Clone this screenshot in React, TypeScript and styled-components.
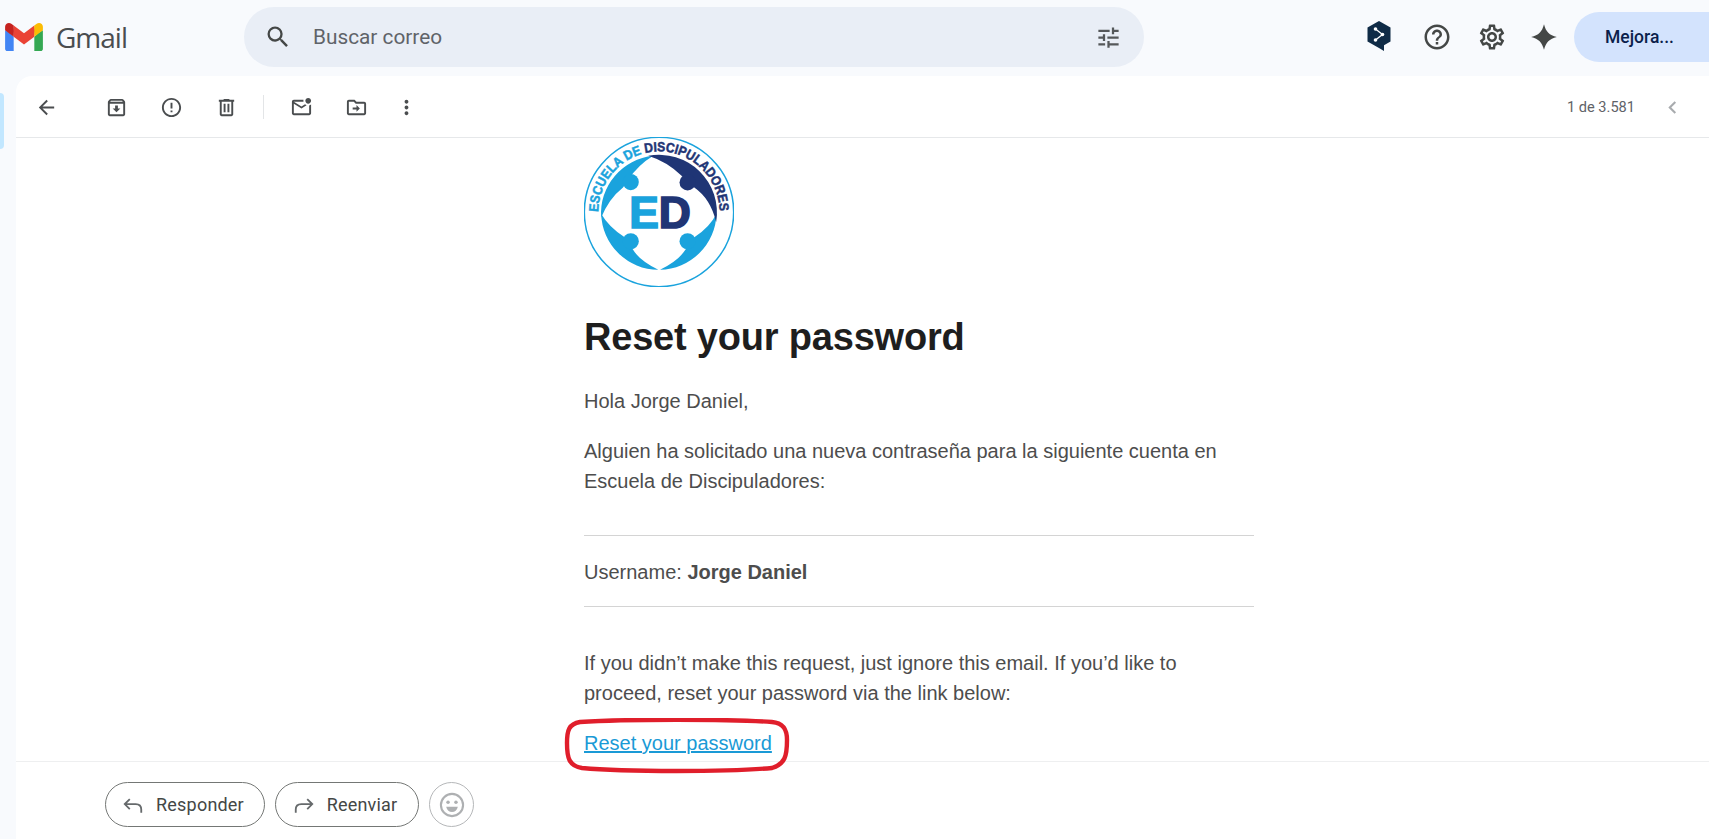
import React from "react";
import styled, { createGlobalStyle } from "styled-components";

const Global = createGlobalStyle`
  html, body { margin: 0; padding: 0; height: 100%; overflow: hidden; background: #f8fafd; }
  #root { height: 100%; }
`;

const Page = styled.div`
  height: 839px;
  display: flex;
  flex-direction: column;
  background: #f8fafd;
  font-family: Roboto, "Liberation Sans", sans-serif;
  overflow: hidden;
`;

const TopBar = styled.header`
  flex: 0 0 76px;
  height: 76px;
  display: flex;
  align-items: flex-start;
`;

const Brand = styled.div`
  flex: 0 0 244px;
  height: 74px;
  padding-left: 5px;
  box-sizing: border-box;
  display: flex;
  align-items: center;
  gap: 13px;
`;

const BrandName = styled.span`
  font-family: "Open Sans", Roboto, sans-serif;
  font-size: 28px;
  letter-spacing: -1px;
  color: #4a4d4f;
`;

const SearchPill = styled.div`
  width: 900px;
  height: 60px;
  margin-top: 7px;
  padding: 0 16px 0 14px;
  box-sizing: border-box;
  border-radius: 30px;
  background: #e9eef6;
  display: flex;
  align-items: center;
`;

const SearchText = styled.span`
  flex: 1;
  margin-left: 15px;
  font-size: 20.8px;
  color: #5f6368;
`;

const Slot = styled.span<{ $left?: number; $right?: number }>`
  flex: 0 0 40px;
  width: 40px;
  height: 40px;
  margin-left: ${(p) => p.$left ?? 0}px;
  margin-right: ${(p) => p.$right ?? 0}px;
  display: flex;
  align-items: center;
  justify-content: center;
`;

const Actions = styled.div`
  margin-left: auto;
  height: 74px;
  display: flex;
  align-items: center;
`;

const Upgrade = styled.div`
  width: 135px;
  height: 50px;
  margin-left: 10px;
  padding-right: 4px;
  box-sizing: border-box;
  border-radius: 25px 0 0 25px;
  background: #d3e3fd;
  color: #0b1f4b;
  font-size: 17.5px;
  font-weight: 500;
  display: flex;
  align-items: center;
  justify-content: center;
`;

const Main = styled.div`
  flex: 1;
  display: flex;
  min-height: 0;
`;

const Rail = styled.div`
  flex: 0 0 16px;
  padding-top: 17px;
`;

const RailMark = styled.div`
  width: 4px;
  height: 56px;
  border-radius: 0 8px 8px 0;
  background: #c2e7ff;
`;

const Card = styled.main`
  flex: 1;
  min-width: 0;
  display: flex;
  flex-direction: column;
  background: #fff;
  border-top-left-radius: 16px;
`;

const Toolbar = styled.div`
  flex: 0 0 62px;
  height: 62px;
  box-sizing: border-box;
  padding: 1px 0 0 10px;
  border-bottom: 1px solid #e6e8ea;
  display: flex;
  align-items: center;
  gap: 15px;
`;

const ToolDivider = styled.span`
  width: 1px;
  height: 24px;
  margin: 0 2px;
  background: #e3e5e7;
`;

const Count = styled.span`
  margin-left: auto;
  font-size: 14.6px;
  color: #5f6368;
`;

const Body = styled.div`
  flex: 1;
  position: relative;
  z-index: 1;
  padding-left: 568px;
  min-height: 0;
`;

const Mail = styled.article`
  width: 670px;
  font-family: "Liberation Sans", Arial, sans-serif;
  font-size: 20px;
  line-height: 30px;
  color: #4d4d4d;
`;

const Logo = styled.svg`
  display: block;
  width: 150px;
  height: 150px;
  margin-top: -1px;
`;

const Title = styled.h1`
  margin: 27px 0 26px;
  font-size: 38px;
  line-height: 46px;
  font-weight: 700;
  letter-spacing: -0.2px;
  color: #1e1e1e;
`;

const Para = styled.p`
  margin: 0 0 20px;
`;

const UserBox = styled.div`
  margin: 39px 0 41px;
  padding: 21px 0 19px;
  border-top: 1px solid #d4d4d4;
  border-bottom: 1px solid #d4d4d4;
`;

const LinkWrap = styled.div`
  position: relative;
  width: max-content;
`;

const MailLink = styled.a`
  color: #1a9ad6;
  text-decoration: underline;
`;

const Oval = styled.svg`
  position: absolute;
  left: -20px;
  top: -10px;
  width: 226px;
  height: 56px;
  pointer-events: none;
`;

const ReplyBar = styled.div`
  flex: 0 0 78px;
  box-sizing: border-box;
  padding: 20px 0 0 89px;
  border-top: 1px solid #eeeff0;
  display: flex;
  align-items: flex-start;
  gap: 10px;
`;

const ReplyButton = styled.div<{ $w: number }>`
  width: ${(p) => p.$w}px;
  height: 45px;
  box-sizing: border-box;
  padding-right: 4px;
  border: 1px solid #747775;
  border-radius: 23px;
  display: flex;
  align-items: center;
  justify-content: center;
  gap: 12px;
  font-size: 18px;
  letter-spacing: 0.2px;
  color: #444746;
`;

const EmojiButton = styled.div`
  width: 45px;
  height: 45px;
  box-sizing: border-box;
  border: 1px solid #b5b7b9;
  border-radius: 50%;
  display: flex;
  align-items: center;
  justify-content: center;
`;

const paths = {
  search: "M15.5 14h-.79l-.28-.27A6.471 6.471 0 0 0 16 9.5 6.5 6.5 0 1 0 9.5 16c1.61 0 3.09-.59 4.23-1.57l.27.28v.79l5 4.99L20.49 19l-4.99-5zm-6 0C7.01 14 5 11.99 5 9.5S7.01 5 9.5 5 14 7.01 14 9.5 11.99 14 9.5 14z",
  tune: "M3 17v2h6v-2H3zM3 5v2h10V5H3zm10 16v-2h8v-2h-8v-2h-2v6h2zM7 9v2H3v2h4v2h2V9H7zm14 4v-2H11v2h10zm-6-4h2V7h4V5h-4V3h-2v6z",
  help: "M11 18h2v-2h-2v2zm1-16C6.48 2 2 6.48 2 12s4.48 10 10 10 10-4.48 10-10S17.52 2 12 2zm0 18c-4.41 0-8-3.59-8-8s3.59-8 8-8 8 3.59 8 8-3.59 8-8 8zm0-14c-2.21 0-4 1.79-4 4h2c0-1.1.9-2 2-2s2 .9 2 2c0 2-3 1.75-3 5h2c0-2.25 3-2.5 3-5 0-2.21-1.79-4-4-4z",
  gear: "M19.43 12.98c.04-.32.07-.64.07-.98 0-.34-.03-.66-.07-.98l2.11-1.65c.19-.15.24-.42.12-.64l-2-3.46c-.09-.16-.26-.25-.44-.25-.06 0-.12.01-.17.03l-2.49 1c-.52-.4-1.08-.73-1.69-.98l-.38-2.65C14.46 2.18 14.25 2 14 2h-4c-.25 0-.46.18-.49.42l-.38 2.65c-.61.25-1.17.59-1.69.98l-2.49-1c-.06-.02-.12-.03-.18-.03-.17 0-.34.09-.43.25l-2 3.46c-.13.22-.07.49.12.64l2.11 1.65c-.04.32-.07.65-.07.98 0 .33.03.66.07.98l-2.11 1.65c-.19.15-.24.42-.12.64l2 3.46c.09.16.26.25.44.25.06 0 .12-.01.17-.03l2.49-1c.52.4 1.08.73 1.69.98l.38 2.65c.03.24.24.42.49.42h4c.25 0 .46-.18.49-.42l.38-2.65c.61-.25 1.17-.59 1.69-.98l2.49 1c.06.02.12.03.18.03.17 0 .34-.09.43-.25l2-3.46c.12-.22.07-.49-.12-.64l-2.11-1.65zm-1.98-1.71c.04.31.05.52.05.73 0 .21-.02.43-.05.73l-.14 1.13.89.7 1.08.84-.7 1.21-1.27-.51-1.04-.42-.9.68c-.43.32-.84.56-1.25.73l-1.06.43-.16 1.13-.2 1.35h-1.4l-.19-1.35-.16-1.13-1.06-.43c-.43-.18-.83-.41-1.23-.71l-.91-.7-1.06.43-1.27.51-.7-1.21 1.08-.84.89-.7-.14-1.13c-.03-.31-.05-.54-.05-.74s.02-.43.05-.73l.14-1.13-.89-.7-1.08-.84.7-1.21 1.27.51 1.04.42.9-.68c.43-.32.84-.56 1.25-.73l1.06-.43.16-1.13.2-1.35h1.39l.19 1.35.16 1.13 1.06.43c.43.18.83.41 1.23.71l.91.7 1.06-.43 1.27-.51.7 1.21-1.07.85-.89.7.14 1.13zM12 8c-2.21 0-4 1.79-4 4s1.79 4 4 4 4-1.79 4-4-1.79-4-4-4zm0 6c-1.1 0-2-.9-2-2s.9-2 2-2 2 .9 2 2-.9 2-2 2z",
  spark: "M12 1C13.6 7.4 16.6 10.4 23 12 16.6 13.6 13.6 16.6 12 23 10.4 16.6 7.4 13.6 1 12 7.4 10.4 10.4 7.4 12 1Z",
  back: "M20 11H7.83l5.59-5.59L12 4l-8 8 8 8 1.41-1.41L7.83 13H20v-2z",
  archive: "M20.54 5.23l-1.39-1.68C18.88 3.21 18.47 3 18 3H6c-.47 0-.88.21-1.16.55L3.46 5.23C3.17 5.57 3 6.02 3 6.5V19c0 1.1.9 2 2 2h14c1.1 0 2-.9 2-2V6.5c0-.48-.17-.93-.46-1.27zM6.24 5h11.52l.83 1H5.42l.82-1zM5 19V8h14v11H5zm8.45-9h-2.9v3H8l4 4 4-4h-2.55z",
  report: "M11 15h2v2h-2zm0-8h2v6h-2zm.99-5C6.47 2 2 6.48 2 12s4.47 10 9.99 10C17.52 22 22 17.52 22 12S17.52 2 11.99 2zM12 20c-4.42 0-8-3.58-8-8s3.58-8 8-8 8 3.58 8 8-3.58 8-8 8z",
  trash: "M15 4V3H9v1H4v2h1v13c0 1.1.9 2 2 2h10c1.1 0 2-.9 2-2V6h1V4h-5zm2 15H7V6h10v13zM9 8h2v9H9zm4 0h2v9h-2z",
  unread: "M22 8.98V18c0 1.1-.9 2-2 2H4c-1.1 0-2-.9-2-2V6c0-1.1.9-2 2-2h10.1c-.06.32-.1.66-.1 1s.04.68.1 1H4l8 5 3.67-2.29c.47.43 1.02.76 1.63.98L12 13 4 8v10h16V9.9c.74-.15 1.42-.48 2-.92zM16 5c0 1.66 1.34 3 3 3s3-1.34 3-3-1.34-3-3-3-3 1.34-3 3z",
  move: "M20 6h-8l-2-2H4c-1.1 0-1.99.9-1.99 2L2 18c0 1.1.9 2 2 2h16c1.1 0 2-.9 2-2V8c0-1.1-.9-2-2-2zm0 12H4V6h5.17l2 2H20v10zm-8-1.5V14H8v-2h4V9.5l3.5 3.5z",
  more: "M12 8c1.1 0 2-.9 2-2s-.9-2-2-2-2 .9-2 2 .9 2 2 2zm0 2c-1.1 0-2 .9-2 2s.9 2 2 2 2-.9 2-2-.9-2-2-2zm0 6c-1.1 0-2 .9-2 2s.9 2 2 2 2-.9 2-2-.9-2-2-2z",
  chevron: "M15.41 7.41 14 6l-6 6 6 6 1.41-1.41L10.83 12z",
};

const Icon = ({ d, size = 23, color = "#4a4d4f" }: { d: string; size?: number; color?: string }) => (
  <svg width={size} height={size} viewBox="0 0 24 24" fill={color}>
    <path d={d} />
  </svg>
);

const GmailMark = () => (
  <svg width="38" height="28.5" viewBox="0 0 256 193">
    <path fill="#4285F4" d="M58.182 192.05V93.14L27.507 65.077 0 49.504v125.091c0 9.658 7.825 17.455 17.455 17.455h40.727z" />
    <path fill="#34A853" d="M197.818 192.05h40.727c9.659 0 17.455-7.826 17.455-17.455V49.505l-31.156 17.837-27.026 25.798v98.91z" />
    <path fill="#EA4335" d="M58.182 93.14l-4.174-38.647 4.174-36.989L128 69.868l69.818-52.364 4.669 34.992-4.669 40.644L128 145.504z" />
    <path fill="#FBBC04" d="M197.818 17.504V93.14L256 49.504V26.231c0-21.585-24.64-33.89-41.89-20.945l-16.292 12.218z" />
    <path fill="#C5221F" d="M0 49.504l26.759 20.07L58.182 93.14V17.504L41.89 5.286C24.61-7.66 0 4.646 0 26.23v23.273z" />
  </svg>
);

const DeepL = () => (
  <svg width="26" height="36" viewBox="0 0 26 36">
    <path fill="#0f2b46" d="M13 2 L24.5 8.6 V22.4 L18 26.2 V32 L13 29 L1.5 22.4 V8.6 Z" />
    <path fill="none" stroke="#fff" strokeWidth="1.3" d="M9.5 10 L16.5 15.5 L9.5 21" />
    <circle cx="9.5" cy="10" r="1.8" fill="#fff" />
    <circle cx="9.5" cy="21" r="1.8" fill="#fff" />
    <circle cx="16.5" cy="15.5" r="1.8" fill="#fff" />
  </svg>
);

const ReplyGlyph = ({ flip }: { flip?: boolean }) => (
  <svg width="22" height="22" viewBox="0 0 24 24" fill="none" stroke="#666a6c" strokeWidth="2" style={flip ? { transform: "scaleX(-1)" } : undefined}>
    <path d="M8.5 5.5 L3 11 L8.5 16.5 M3 11 H15 Q21 11 21 17 V20.5" />
  </svg>
);

const Smile = () => (
  <svg width="28" height="28" viewBox="0 0 24 24">
    <circle cx="12" cy="12" r="9.5" fill="none" stroke="#aeb0b2" strokeWidth="1.8" />
    <circle cx="8.6" cy="9.6" r="1.5" fill="#aeb0b2" />
    <circle cx="15.4" cy="9.6" r="1.5" fill="#aeb0b2" />
    <path d="M7 13.5 H17 C16.4 16.4 14.4 18 12 18 S7.6 16.4 7 13.5Z" fill="#aeb0b2" />
  </svg>
);

const BLUE = "#1aa3dd";
const NAVY = "#1f3575";

const EscuelaLogo = () => (
  <Logo viewBox="44 22 446 446">
    <circle cx="267" cy="245" r="222" fill="#fff" stroke={BLUE} strokeWidth="4.5" />
    <path fill={BLUE} d="M95 262 A172 172 0 0 1 250 78 Q205 105 175 150 L160 172 Q118 205 95 262Z" />
    <path fill={BLUE} d="M95 250 A172 172 0 0 0 265 417 Q215 392 195 365 L165 320 Q118 290 95 250Z" />
    <path fill={BLUE} d="M438 250 A172 172 0 0 1 270 417 Q320 392 340 365 L372 320 Q418 290 438 250Z" />
    <path fill={NAVY} d="M235 78 A172 172 0 0 1 437 275 Q420 205 372 172 L335 138 Q290 95 235 78Z" />
    <circle cx="183" cy="156" r="24" fill={BLUE} />
    <circle cx="183" cy="332" r="24" fill={BLUE} />
    <circle cx="352" cy="332" r="24" fill={BLUE} />
    <circle cx="352" cy="157" r="24" fill={NAVY} />
    <defs>
      <path id="logoArc" d="M87 245 A180 180 0 0 1 447 245" />
    </defs>
    <text fontFamily="'Liberation Sans', sans-serif" fontWeight="700" fontSize="40" strokeWidth="1.5">
      <textPath href="#logoArc" textLength="563" lengthAdjust="spacingAndGlyphs">
        <tspan fill={BLUE} stroke={BLUE}>ESCUELA DE </tspan>
        <tspan fill={NAVY} stroke={NAVY}>DISCIPULADORES</tspan>
      </textPath>
    </text>
    <text x="270" y="292" textAnchor="middle" fontFamily="'Liberation Sans', sans-serif" fontWeight="700" fontSize="132" strokeWidth="5">
      <tspan fill={BLUE} stroke={BLUE}>E</tspan>
      <tspan fill={NAVY} stroke={NAVY}>D</tspan>
    </text>
  </Logo>
);

export default function App() {
  return (
    <Page>
      <Global />
      <TopBar>
        <Brand>
          <GmailMark />
          <BrandName>Gmail</BrandName>
        </Brand>
        <SearchPill>
          <Slot><Icon d={paths.search} size={28} color="#444746" /></Slot>
          <SearchText>Buscar correo</SearchText>
          <Slot><Icon d={paths.tune} size={27} color="#55585a" /></Slot>
        </SearchPill>
        <Actions>
          <Slot><DeepL /></Slot>
          <Slot $left={18}><Icon d={paths.help} size={30} color="#444746" /></Slot>
          <Slot $left={15}><Icon d={paths.gear} size={30} color="#444746" /></Slot>
          <Slot $left={12}><Icon d={paths.spark} size={28} color="#444746" /></Slot>
          <Upgrade>Mejora...</Upgrade>
        </Actions>
      </TopBar>
      <Main>
        <Rail><RailMark /></Rail>
        <Card>
          <Toolbar>
            <Slot><Icon d={paths.back} /></Slot>
            <Slot $left={15}><Icon d={paths.archive} /></Slot>
            <Slot><Icon d={paths.report} /></Slot>
            <Slot><Icon d={paths.trash} /></Slot>
            <ToolDivider />
            <Slot><Icon d={paths.unread} /></Slot>
            <Slot><Icon d={paths.move} /></Slot>
            <Slot $left={-5}><Icon d={paths.more} /></Slot>
            <Count>1 de 3.581</Count>
            <Slot $left={2} $right={17}><Icon d={paths.chevron} size={25} color="#a8abae" /></Slot>
          </Toolbar>
          <Body>
            <Mail>
              <EscuelaLogo />
              <Title>Reset your password</Title>
              <Para>Hola Jorge Daniel,</Para>
              <Para>Alguien ha solicitado una nueva contraseña para la siguiente cuenta en Escuela de Discipuladores:</Para>
              <UserBox>Username: <strong>Jorge Daniel</strong></UserBox>
              <Para>If you didn’t make this request, just ignore this email. If you’d like to proceed, reset your password via the link below:</Para>
              <LinkWrap>
                <MailLink href="#">Reset your password</MailLink>
                <Oval viewBox="0 0 226 56">
                  <path d="M16 4 C60 1 165 1 208 4 C220 5 223 12 223 22 C223 38 221 46 208 50 C165 54 60 54 18 50 C5 48 3 40 3 25 C3 12 5 6 16 4Z" fill="none" stroke="#e01e2b" strokeWidth="4.4" />
                </Oval>
              </LinkWrap>
            </Mail>
          </Body>
          <ReplyBar>
            <ReplyButton $w={160}><ReplyGlyph />Responder</ReplyButton>
            <ReplyButton $w={144}><ReplyGlyph flip />Reenviar</ReplyButton>
            <EmojiButton><Smile /></EmojiButton>
          </ReplyBar>
        </Card>
      </Main>
    </Page>
  );
}
